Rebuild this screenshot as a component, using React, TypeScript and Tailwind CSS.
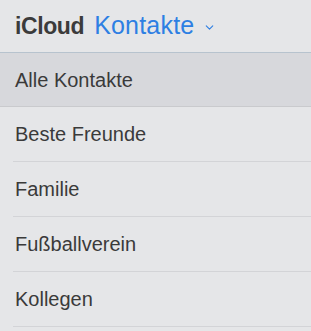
import { ChevronDown } from "lucide-react";

const groups = ["Beste Freunde", "Familie", "Fußballverein", "Kollegen"];

export default function App() {
  return (
    <div
      className="w-[311px] h-[331px] overflow-hidden bg-[#e5e6e8] text-[#3a3a3a]"
      style={{ fontFamily: '"Liberation Sans", Arial, sans-serif' }}
    >
      {/* Header */}
      <div className="h-[53px] flex items-center pl-[15px] border-b border-[#b7c3ce]">
        <span className="text-[23px] font-bold tracking-[-0.4px] text-[#3b3b3b]">iCloud</span>
        <span className="ml-[10px] text-[25px] tracking-[0.2px] text-[#2d7fe3]">Kontakte</span>
        <ChevronDown className="ml-[9px] mt-[2px] w-[13px] h-[13px] text-[#2d7fe3]" strokeWidth={2} />
      </div>

      {/* Selected */}
      <div className="h-[54px] flex items-center pl-[15px] bg-[#d7d8dc] border-b border-[#c9cacd] text-[20px]">
        Alle Kontakte
      </div>

      {groups.map((g) => (
        <div key={g} className="h-[55px] pl-[13px]">
          <div className="h-full flex items-center pl-[2px] border-b border-[#d3d4d7] text-[20px]">
            {g}
          </div>
        </div>
      ))}
    </div>
  );
}
